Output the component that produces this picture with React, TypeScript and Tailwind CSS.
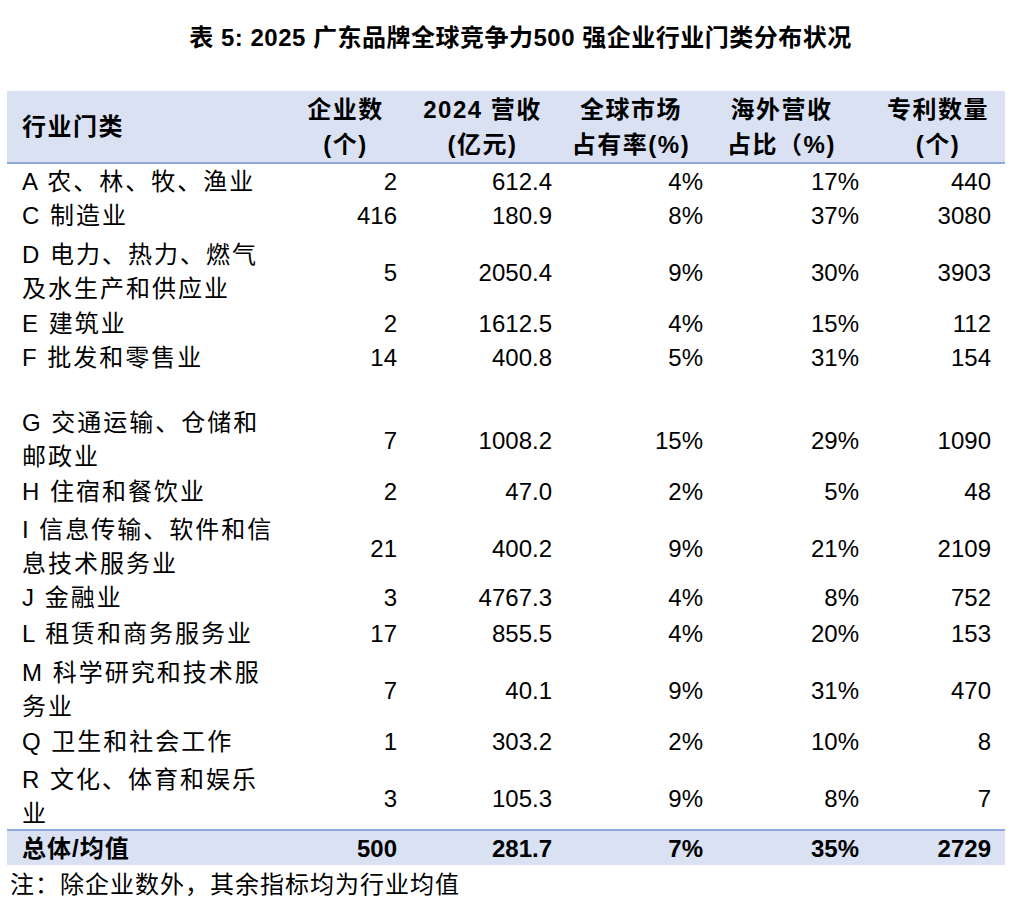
const FONT = { fontFamily: '"Liberation Sans", "Noto Sans CJK SC", sans-serif' };

type Row = {
  label: string[];
  count: string;
  revenue: string;
  share: string;
  overseas: string;
  patents: string;
  h: string;
};

const rows: Row[] = [
  { label: ['A 农、林、牧、渔业'], count: '2', revenue: '612.4', share: '4%', overseas: '17%', patents: '440', h: 'h-[34px]' },
  { label: ['C 制造业'], count: '416', revenue: '180.9', share: '8%', overseas: '37%', patents: '3080', h: 'h-[36px]' },
  { label: ['D 电力、热力、燃气', '及水生产和供应业'], count: '5', revenue: '2050.4', share: '9%', overseas: '30%', patents: '3903', h: 'h-[72px]' },
  { label: ['E 建筑业'], count: '2', revenue: '1612.5', share: '4%', overseas: '15%', patents: '112', h: 'h-[34px]' },
  { label: ['F 批发和零售业'], count: '14', revenue: '400.8', share: '5%', overseas: '31%', patents: '154', h: 'h-[33px]' },
  { label: [], count: '', revenue: '', share: '', overseas: '', patents: '', h: 'h-[29px]' },
  { label: ['G 交通运输、仓储和', '邮政业'], count: '7', revenue: '1008.2', share: '15%', overseas: '29%', patents: '1090', h: 'h-[72px]' },
  { label: ['H 住宿和餐饮业'], count: '2', revenue: '47.0', share: '2%', overseas: '5%', patents: '48', h: 'h-[36px]' },
  { label: ['I 信息传输、软件和信', '息技术服务业'], count: '21', revenue: '400.2', share: '9%', overseas: '21%', patents: '2109', h: 'h-[70px]' },
  { label: ['J 金融业'], count: '3', revenue: '4767.3', share: '4%', overseas: '8%', patents: '752', h: 'h-[36px]' },
  { label: ['L 租赁和商务服务业'], count: '17', revenue: '855.5', share: '4%', overseas: '20%', patents: '153', h: 'h-[36px]' },
  { label: ['M 科学研究和技术服', '务业'], count: '7', revenue: '40.1', share: '9%', overseas: '31%', patents: '470', h: 'h-[72px]' },
  { label: ['Q 卫生和社会工作'], count: '1', revenue: '303.2', share: '2%', overseas: '10%', patents: '8', h: 'h-[36px]' },
  { label: ['R 文化、体育和娱乐', '业'], count: '3', revenue: '105.3', share: '9%', overseas: '8%', patents: '7', h: 'h-[69px]' },
];

const GRID = 'grid grid-cols-[283px_115px_155px_150px_155px_140px]';

function DataRow({ row }: { row: Row }) {
  const twoLine = row.label.length > 1;
  const valueCls = `flex items-center justify-end ${twoLine ? 'pt-[6px]' : ''}`;
  return (
    <div className={`${GRID} ${row.h} text-[24px] text-black`}>
      <div className={`flex flex-col justify-center pl-[15px] tracking-[2px] leading-[34px] ${twoLine ? 'pt-[3px]' : ''}`}>
        {row.label.map((l, i) => (
          <span key={i} className="whitespace-nowrap">{l}</span>
        ))}
      </div>
      <div className={`${valueCls} pr-2`}>{row.count}</div>
      <div className={`${valueCls} pr-2`}>{row.revenue}</div>
      <div className={`${valueCls} pr-[7px]`}>{row.share}</div>
      <div className={`${valueCls} pr-[6px]`}>{row.overseas}</div>
      <div className={`${valueCls} pr-[14px]`}>{row.patents}</div>
    </div>
  );
}

function HeadCell({ lines, className = '' }: { lines: string[]; className?: string }) {
  return (
    <div className={`flex flex-col items-center justify-center leading-[35px] tracking-[1.5px] ${className}`}>
      {lines.map((l, i) => (
        <span key={i} className="whitespace-nowrap">{l}</span>
      ))}
    </div>
  );
}

export default function App() {
  return (
    <div className="w-[1011px] min-h-[911px] bg-white text-black" style={FONT}>
      <div className="pt-[22px] flex justify-center pl-[30px]">
        <h1 className="text-[24px] leading-[32px] font-bold whitespace-nowrap tracking-[0.5px]">
          表 5: 2025 广东品牌全球竞争力500 强企业行业门类分布状况
        </h1>
      </div>

      <div className="mt-[37px] ml-[7px] w-[998px]">
        <div className={`${GRID} h-[73px] bg-[#d9e1f2] border-b-2 border-[#8ea9db] text-[24px] font-bold`}>
          <div className="flex items-center pl-[15px] tracking-[1.5px]">行业门类</div>
          <HeadCell lines={['企业数', '(个)']} className="pr-[4px]" />
          <HeadCell lines={['2024 营收', '(亿元)']} />
          <HeadCell lines={['全球市场', '占有率(%)']} className="pr-[8px]" />
          <HeadCell lines={['海外营收', '占比（%)']} className="pr-[12px]" />
          <HeadCell lines={['专利数量', '(个)']} className="pl-[6px]" />
        </div>

        {rows.map((row, i) => (
          <DataRow key={i} row={row} />
        ))}

        <div className={`${GRID} h-[36px] bg-[#d9e1f2] border-t-2 border-[#8ea9db] text-[24px] font-bold`}>
          <div className="flex items-center pl-[15px] tracking-[1px]">总体/均值</div>
          <div className="flex items-center justify-end pr-2">500</div>
          <div className="flex items-center justify-end pr-2">281.7</div>
          <div className="flex items-center justify-end pr-[7px]">7%</div>
          <div className="flex items-center justify-end pr-[6px]">35%</div>
          <div className="flex items-center justify-end pr-[14px]">2729</div>
        </div>
      </div>

      <p className="mt-[5px] pl-[10px] text-[24px] leading-[30px] tracking-[1px]">注：除企业数外，其余指标均为行业均值</p>
    </div>
  );
}
